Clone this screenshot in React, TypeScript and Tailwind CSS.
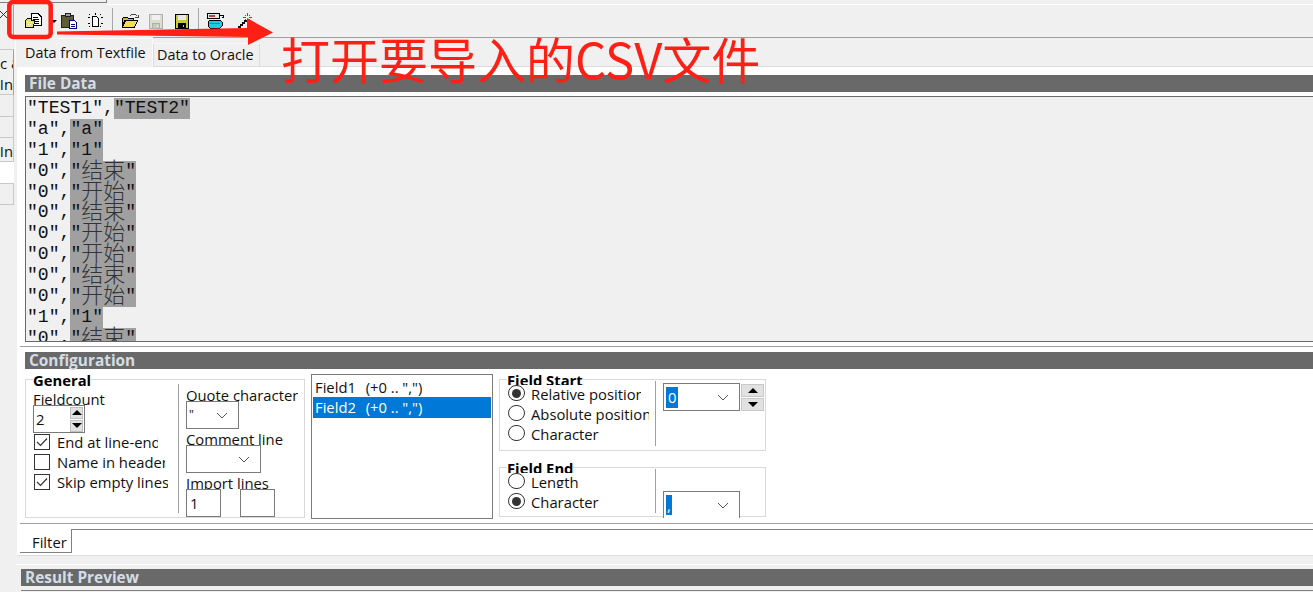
import React from "react";

const ui = "font-['Open_Sans','Noto_Sans',sans-serif] text-[14.8px] leading-[20px] text-[#111]";

const rows: [string, string][] = [
  ['"TEST1",', '"TEST2"'],
  ['"a",', '"a"'],
  ['"1",', '"1"'],
  ['"0",', '"结束"'],
  ['"0",', '"开始"'],
  ['"0",', '"结束"'],
  ['"0",', '"开始"'],
  ['"0",', '"开始"'],
  ['"0",', '"结束"'],
  ['"0",', '"开始"'],
  ['"1",', '"1"'],
  ['"0",', '"结束"'],
];

function DocFolderIcon() {
  return (
    <svg width="17" height="16" viewBox="0 0 17 16" shapeRendering="crispEdges">
      <path d="M6 .5h7l3 3v9H6z" fill="#fff" stroke="#000" />
      <path d="M8 4h5M8 6h6M8 8h6M8 10h6" stroke="#000" />
      <path d="M.5 7.5l2-2h4v2h3l-1 7h-8z" fill="#e8e060" stroke="#000" />
      <path d="M2 9h1M4 9h1M6 9h1M3 11h1M5 11h1M2 13h1M4 13h1M6 13h1" stroke="#fff" />
    </svg>
  );
}

function ClipboardIcon() {
  return (
    <svg width="17" height="16" viewBox="0 0 17 16" shapeRendering="crispEdges">
      <path d="M.5 2.5h12v12H.5z" fill="#5e5e34" stroke="#222" />
      <path d="M4 .5h5v3H4z" fill="#a0a0a0" stroke="#222" />
      <path d="M8.5 7.5h5l2 2v6h-7z" fill="#fff" stroke="#000080" />
      <path d="M10 11h4M10 13h4" stroke="#000080" />
    </svg>
  );
}

function NewDocIcon() {
  return (
    <svg width="17" height="16" viewBox="0 0 17 16" shapeRendering="crispEdges">
      <path d="M5.5 3.5h4l2 2v8h-6z" fill="#fff" stroke="#000" />
      <path d="M8 0v2M1 4h2M14 4h2M2 1l1 1M14 1l-1 1M1 10h2M14 10h2M2 14l1-1M14 14l-1-1" stroke="#000" />
    </svg>
  );
}

function OpenFolderIcon() {
  return (
    <svg width="17" height="16" viewBox="0 0 17 16" shapeRendering="crispEdges">
      <path d="M.5 5.5l1-1h4l1 1h5v2h-9l-2 7z" fill="#c8b830" stroke="#000" />
      <path d="M.5 14.5l3-7h12l-3 7z" fill="#f0e050" stroke="#000" />
      <path d="M8 3l2-2h3l2 2M13 4h3V2" fill="none" stroke="#444" />
    </svg>
  );
}

function DiskIcon({ off }: { off?: boolean }) {
  const line = off ? "#b0b0a8" : "#000";
  return (
    <svg width="14" height="15" viewBox="0 0 14 15" shapeRendering="crispEdges">
      <path d="M.5.5h13v14H.5z" fill={off ? "#dcdcd0" : "#c8c840"} stroke={line} />
      <path d="M3 1h8v5H3z" fill={off ? "#f0f0f0" : "#e8e8e8"} />
      <path d="M3.5 9.5h7v5h-7z" fill={off ? "#c8c8c0" : "#000"} stroke={line} />
      <path d="M8 11h1v2H8z" fill={off ? "#f0f0f0" : "#c8c840"} />
    </svg>
  );
}

function DbIcon() {
  return (
    <svg width="18" height="16" viewBox="0 0 18 16" shapeRendering="crispEdges">
      <path d="M.5.5h12v5H.5z" fill="#e8e8e8" stroke="#000" />
      <path d="M2 2h6v2H2z" fill="#c04040" />
      <path d="M13 2h3v3M15 4h2" fill="none" stroke="#000" />
      <path d="M1 9l2-2h10l2 2v4l-2 2H3l-2-2z" fill="#18d0e0" stroke="#000" />
      <path d="M3 10h10" stroke="#0090a0" />
    </svg>
  );
}

function WandIcon() {
  return (
    <svg width="15" height="16" viewBox="0 0 15 16" shapeRendering="crispEdges">
      <path d="M0 13h2v-2h2V9h2V7h3v2H7v2H5v2H3v2H0z" fill="#111" />
      <path d="M9 0h1v3H9zM9 6h1v2H9zM5 4h3v1H5zM11 4h3v1h-3zM7 2h1v1H7zM11 2h1v1h-1zM7 6h1v1H7zM11 6h1v1h-1z" fill="#e02020" />
    </svg>
  );
}

function Chevron() {
  return (
    <svg width="12" height="7" viewBox="0 0 12 7" className="shrink-0">
      <path d="M1 1l5 5 5-5" fill="none" stroke="#555" strokeWidth="1" />
    </svg>
  );
}

function Select({ width, children, className = "" }: { width: string; children?: React.ReactNode; className?: string }) {
  return (
    <div className={`${width} h-[28px] shrink-0 bg-white border border-[#7a7a7a] flex items-center justify-between pl-[2px] pr-[10px] ${className}`}>
      <span className="flex items-center">{children}</span>
      <Chevron />
    </div>
  );
}

function SpinButtons() {
  return (
    <div className="flex flex-col gap-[1px]">
      <div className="w-[13px] h-[12px] bg-[#e1e1e1] border border-[#c0c0c0] flex items-center justify-center">
        <div className="w-0 h-0 border-x-[5px] border-x-transparent border-b-[5px] border-b-black" />
      </div>
      <div className="w-[13px] h-[12px] bg-[#e1e1e1] border border-[#c0c0c0] flex items-center justify-center">
        <div className="w-0 h-0 border-x-[5px] border-x-transparent border-t-[5px] border-t-black" />
      </div>
    </div>
  );
}

function Check({ on, label, width }: { on?: boolean; label: string; width: string }) {
  return (
    <div className="h-[20px] flex items-center">
      <div className="w-[16px] h-[16px] ml-[1px] border border-[#333] bg-white flex items-center justify-center">
        {on && (
          <svg width="12" height="10" viewBox="0 0 12 10">
            <path d="M1 5l3.5 3.5L11 1.5" fill="none" stroke="#333" strokeWidth="1.2" />
          </svg>
        )}
      </div>
      <span className={`${width} ml-[7px] overflow-hidden whitespace-nowrap`}>{label}</span>
    </div>
  );
}

function Radio({ on, label, width, clip }: { on?: boolean; label: string; width: string; clip?: boolean }) {
  return (
    <div className="h-[20px] flex items-start">
      <div className="w-[17px] h-[16px] rounded-full border border-[#333] bg-white flex items-center justify-center shrink-0">
        {on && <div className="w-[9px] h-[9px] rounded-full bg-[#333]" />}
      </div>
      <span className={`${width} ${clip ? "h-[16px]" : "h-[20px]"} ml-[6px] -mt-[1px] overflow-hidden whitespace-nowrap`}>{label}</span>
    </div>
  );
}

function Legend({ children, height }: { children: React.ReactNode; height: string }) {
  return (
    <div className={`-mt-[8px] ml-[8px] w-fit bg-white ${height} font-bold overflow-hidden leading-[16px] text-black`}>
      {children}
    </div>
  );
}

function FieldLabel({ children }: { children: React.ReactNode }) {
  return <div className="h-[16px] overflow-hidden whitespace-nowrap leading-[20px]">{children}</div>;
}

function Bar({ children, className = "" }: { children: React.ReactNode; className?: string }) {
  return (
    <div className={`h-[17px] bg-[#696969] text-[#d4dde6] font-bold text-[15.4px] leading-[17px] whitespace-nowrap ${className}`}>
      {children}
    </div>
  );
}

function GeneralBox() {
  return (
    <div className="w-[280px] h-[139px] mt-[10px] shrink-0 border border-[#d9d9d9] flex">
      <div className="w-[152px] shrink-0">
        <div className="-ml-[1px]">
          <Legend height="h-[16px]">General</Legend>
        </div>
        <div className="pl-[7px] pt-[1px]">
          <FieldLabel>Fieldcount</FieldLabel>
          <div className="w-[52px] h-[28px] border border-[#7a7a7a] bg-white flex items-center justify-between pl-[2px] pr-[1px]">
            <span>2</span>
            <SpinButtons />
          </div>
          <div className="-mt-[1px]">
            <Check on label="End at line-ending" width="w-[101px]" />
            <Check label="Name in header" width="w-[108px]" />
            <Check on label="Skip empty lines" width="w-[111px]" />
          </div>
        </div>
      </div>
      <div className="w-[1px] h-[129px] mt-[4px] bg-[#a0a0a0] shrink-0" />
      <div className="pl-[7px] pt-[5px]">
        <FieldLabel>Quote character</FieldLabel>
        <Select width="w-[53px]">
          <span className="text-[12px]">"</span>
        </Select>
        <FieldLabel>Comment line</FieldLabel>
        <Select width="w-[75px]" />
        <FieldLabel>Import lines</FieldLabel>
        <div className="flex gap-[19px]">
          <div className="w-[35px] h-[28px] bg-white border border-[#7a7a7a] pl-[3px] leading-[26px]">1</div>
          <div className="w-[35px] h-[28px] bg-white border border-[#7a7a7a]" />
        </div>
      </div>
    </div>
  );
}

function FieldList() {
  return (
    <div className="w-[182px] h-[145px] mt-[5px] ml-[6px] shrink-0 border border-[#7a7a7a] px-[1px] pt-[2px]">
      <div className="h-[20px] pl-[2px] whitespace-pre">
        Field1  <span className="ml-[2px]">{'(+0 .. ",")'}</span>
      </div>
      <div className="h-[21px] pl-[2px] whitespace-pre bg-[#0078d7] text-white">
        Field2  <span className="ml-[2px]">{'(+0 .. ",")'}</span>
      </div>
    </div>
  );
}

function FieldColumn() {
  return (
    <div className="w-[267px] ml-[6px] shrink-0 mt-[10px]">
      <div className="h-[72px] border border-[#d9d9d9] flex">
        <div className="w-[155px] shrink-0">
          <div className="-ml-[1px]">
            <Legend height="h-[13px]">Field Start</Legend>
          </div>
          <div className="pl-[8px]">
            <Radio on label="Relative position" width="w-[110px]" />
            <Radio label="Absolute position" width="w-[118px]" />
            <Radio label="Character" width="w-[118px]" />
          </div>
        </div>
        <div className="w-[1px] h-[65px] mt-[1px] bg-[#a0a0a0] shrink-0" />
        <div className="ml-[7px] mt-[3px]">
          <Select width="w-[77px]">
            <span className="bg-[#0078d7] text-white px-[2px] leading-[21px]">0</span>
          </Select>
        </div>
        <div className="ml-[1px] mt-[4px]">
          <div className="flex flex-col gap-[1px]">
            <div className="w-[23px] h-[13px] bg-[#e1e1e1] border border-[#c8c8c8] flex items-center justify-center">
              <div className="w-0 h-0 border-x-[5px] border-x-transparent border-b-[5px] border-b-black" />
            </div>
            <div className="w-[23px] h-[13px] bg-[#e1e1e1] border border-[#c8c8c8] flex items-center justify-center">
              <div className="w-0 h-0 border-x-[5px] border-x-transparent border-t-[5px] border-t-black" />
            </div>
          </div>
        </div>
      </div>
      <div className="h-[50px] mt-[16px] border border-[#d9d9d9] flex">
        <div className="w-[155px] shrink-0">
          <div className="-ml-[1px]">
            <Legend height="h-[13px]">Field End</Legend>
          </div>
          <div className="pl-[8px]">
            <Radio clip label="Length" width="w-[118px]" />
            <Radio on label="Character" width="w-[118px]" />
          </div>
        </div>
        <div className="w-[1px] h-[44px] mt-[1px] bg-[#a0a0a0] shrink-0" />
        <div className="ml-[7px] mt-[23px] h-[27px] overflow-hidden shrink-0">
          <Select width="w-[77px]">
            <span className="bg-[#0078d7] text-white px-[1px] leading-[20px]">,</span>
          </Select>
        </div>
      </div>
    </div>
  );
}

function SideColumn() {
  return (
    <div className={`w-[14px] shrink-0 ${ui}`}>
      <div className="h-[31px] border-r border-[#a0a0a0] overflow-hidden">
        <svg width="8" height="20" viewBox="0 0 8 20">
          <path d="M0 6l7 7M7 6l-7 7" fill="none" stroke="#333" />
        </svg>
      </div>
      <div className="h-[14px] border-b border-[#c8c8c8]" />
      <div className="h-[45px] border-r border-b border-r-[#a0a0a0] border-b-[#c8c8c8] overflow-hidden whitespace-nowrap flex flex-col">
        <span className="pt-[3px] h-[24px]">c &amp;</span>
        <span className="flex justify-end">.In</span>
      </div>
      <div className="h-[22px] border-r border-b border-[#c8c8c8]" />
      <div className="h-[21px] border-r border-b border-[#c8c8c8]" />
      <div className="h-[24px] border-r border-b border-[#c8c8c8] flex justify-end items-end overflow-hidden whitespace-nowrap">.In</div>
      <div className="h-[21px] bg-white" />
      <div className="h-[22px] border-y border-r border-[#c8c8c8]" />
    </div>
  );
}

function Toolbar() {
  return (
    <div className="h-[32px] flex items-center">
      <div className="ml-[11px]"><DocFolderIcon /></div>
      <div className="ml-[9px] w-0 h-0 border-x-[3px] border-x-transparent border-t-[3px] border-t-black" />
      <div className="ml-[4px]"><ClipboardIcon /></div>
      <div className="ml-[9px]"><NewDocIcon /></div>
      <div className="ml-[8px] w-[1px] h-[26px] bg-[#a8a8a8]" />
      <div className="ml-[9px]"><OpenFolderIcon /></div>
      <div className="ml-[10px]"><DiskIcon off /></div>
      <div className="ml-[12px]"><DiskIcon /></div>
      <div className="ml-[9px] w-[1px] h-[26px] bg-[#a8a8a8]" />
      <div className="ml-[8px]"><DbIcon /></div>
      <div className="ml-[13px]"><WandIcon /></div>
    </div>
  );
}

function Tabs() {
  return (
    <div className="h-[30px] flex text-[14.4px]">
      <div className="w-[138px] h-[29px] mt-[1px] ml-[1px] border-x border-t border-[#fafafa] pl-[9px] pt-[4px] whitespace-nowrap shrink-0">
        Data from Textfile
      </div>
      <div className="flex-1 h-[30px] border-y border-t-[#a0a0a0] border-b-[#dcdcdc] flex items-end">
        <div className="w-[107px] h-[23px] border-x border-t border-x-[#dcdcdc] border-t-[#f8f8f8] pl-[3px] pt-[1px] whitespace-nowrap">Data to Oracle</div>
      </div>
    </div>
  );
}

function FileData() {
  return (
    <div className="h-[279px] pl-[8px] pt-[8px]">
      <Bar className="pl-[4px]">File Data</Bar>
      <div className="h-[246px] mt-[4px] bg-[#f0f0f0] border-y border-l border-[#696969] overflow-hidden pl-[1px] pt-[1px] font-['Liberation_Mono','Noto_Sans_CJK_SC',monospace] text-[18.1px] leading-[21px] text-[#111]">
        {rows.map(([left, right], i) => (
          <div key={i} className="h-[20.9px] whitespace-pre flex">
            <span>{left}</span>
            <span className="bg-[#a0a0a0]">
              {right.split(/([\u4e00-\u9fff]+)/).map((part, j) =>
                /[\u4e00-\u9fff]/.test(part) ? (
                  <span key={j} className="text-[22px] leading-[0px] font-light text-[#333] align-[-2px] font-['Noto_Sans_CJK_SC',monospace]">{part}</span>
                ) : (
                  <span key={j}>{part}</span>
                )
              )}
            </span>
          </div>
        ))}
      </div>
    </div>
  );
}

function Configuration() {
  return (
    <div>
      <div className="ml-[3px] h-[1px] bg-[#a0a0a0]" />
      <div className="pl-[8px] pt-[5px]">
        <Bar className="pl-[4px]">Configuration</Bar>
        <div className="h-[154px] flex items-start">
          <GeneralBox />
          <FieldList />
          <FieldColumn />
        </div>
      </div>
    </div>
  );
}

function FilterRow() {
  return (
    <div>
      <div className="ml-[3px] h-[1px] bg-[#a0a0a0]" />
      <div className="h-[31px] pt-[5px] flex">
        <div className="ml-[3px] w-[52px] h-[24px] border-r border-b border-[#808080] pl-[12px] pt-[3px]">Filter</div>
        <div className="flex-1 h-[1px] bg-[#808080]" />
      </div>
    </div>
  );
}

export default function App() {
  return (
    <div className="relative w-[1313px] h-[592px] overflow-hidden bg-[#f0f0f0]">
      <div className="h-[5px] flex">
        <div className="w-[107px] h-[3px] border-b border-r border-[#808080]" />
        <div className="flex-1 h-[5px] border-b border-white" />
      </div>
      <div className="flex">
        <SideColumn />
        <div className={`flex-1 min-w-0 ${ui}`}>
          <Toolbar />
          <Tabs />
          <div className="ml-[3px] bg-white border-b border-[#dcdcdc]">
            <FileData />
            <Configuration />
            <FilterRow />
          </div>
          <div className="ml-[2px] mt-[8px] h-[30px] border-t border-white pt-[4px]">
            <Bar className="ml-[5px] pl-[4px]">Result Preview</Bar>
            <div className="ml-[5px] mt-[4px] h-[1px] bg-[#808080]" />
          </div>
        </div>
      </div>

      {/* red annotation drawn over the screenshot */}
      <svg className="absolute left-0 top-0" width="300" height="60" viewBox="0 0 300 60">
        <rect x="9.3" y="2" width="41.4" height="35" rx="4" fill="none" stroke="#fe2015" strokeWidth="4.5" />
        <path d="M57 31.5L247 28L247 18L273 32.5L248 45L248 37L57 34.5z" fill="#fe2015" />
      </svg>
      <div className="absolute left-[281px] top-[28px] whitespace-nowrap text-[#fe2015] text-[49px] leading-[60px] font-['Noto_Sans_CJK_SC','Noto_Sans',sans-serif]">
        打开要导入的CSV文件
      </div>
    </div>
  );
}
